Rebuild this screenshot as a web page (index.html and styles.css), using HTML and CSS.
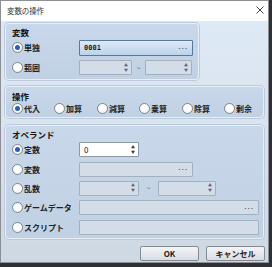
FILE: index.html
```html
<!DOCTYPE html>
<html lang="ja">
<head>
<meta charset="utf-8">
<link rel="stylesheet" href="styles.css">
</head>
<body>
<div class="dialog">
  <div class="titlebar">
    <span class="title">変数の操作</span>
    <svg class="close" width="8" height="8" viewBox="0 0 8 8"><path d="M0.5 0.5L7.5 7.5M7.5 0.5L0.5 7.5" stroke="#444" stroke-width="1"/></svg>
  </div>
  <div class="content">
    <div class="group g1">
      <div class="glabel">変数</div>
      <div class="row">
        <span class="radio checked"></span><span class="rlabel">単独</span>
        <div class="field focus w114"><span class="val mono">0001</span><span class="dots">···</span></div>
      </div>
      <div class="row">
        <span class="radio"></span><span class="rlabel">範囲</span>
        <div class="field dis w53"><span class="spin">▲<br>▼</span></div>
        <span class="tilde">~</span>
        <div class="field dis w47"><span class="spin">▲<br>▼</span></div>
      </div>
    </div>
    <div class="group g2">
      <div class="glabel">操作</div>
      <div class="ops">
        <span class="op"><span class="radio checked"></span><span class="rlabel">代入</span></span>
        <span class="op"><span class="radio"></span><span class="rlabel">加算</span></span>
        <span class="op"><span class="radio"></span><span class="rlabel">減算</span></span>
        <span class="op"><span class="radio"></span><span class="rlabel">乗算</span></span>
        <span class="op"><span class="radio"></span><span class="rlabel">除算</span></span>
        <span class="op"><span class="radio"></span><span class="rlabel">剰余</span></span>
      </div>
    </div>
    <div class="group g3">
      <div class="glabel">オペランド</div>
      <div class="row">
        <span class="radio checked"></span><span class="rlabel">定数</span>
        <div class="field white w60"><span class="val">0</span><span class="spin dark">▲<br>▼</span></div>
      </div>
      <div class="row">
        <span class="radio"></span><span class="rlabel">変数</span>
        <div class="field dis w114"><span class="dots">···</span></div>
      </div>
      <div class="row">
        <span class="radio"></span><span class="rlabel">乱数</span>
        <div class="field dis w60"><span class="spin">▲<br>▼</span></div>
        <span class="tilde t2">~</span>
        <div class="field dis w58"><span class="spin">▲<br>▼</span></div>
      </div>
      <div class="row">
        <span class="radio"></span><span class="rlabel">ゲームデータ</span>
        <div class="field dis wfull"><span class="dots">···</span></div>
      </div>
      <div class="row">
        <span class="radio"></span><span class="rlabel">スクリプト</span>
        <div class="field dis wfull"></div>
      </div>
    </div>
    <div class="buttons">
      <button class="btn">OK</button>
      <button class="btn">キャンセル</button>
    </div>
  </div>
</div>
</body>
</html>
```
FILE: styles.css
```css
html, body {
  margin: 0;
  padding: 0;
  background: #2f3033;
  width: 272px;
  height: 267px;
  overflow: hidden;
  font-family: "Noto Sans CJK JP", "Noto Sans", sans-serif;
}
.dialog {
  width: 267px;
  height: 261px;
  border: 1px solid #8c9096;
  background: linear-gradient(#deeaf6 0%, #d9e4ef 45%, #cdd8e2 100%);
  display: flex;
  flex-direction: column;
}
.titlebar {
  height: 20px;
  background: #fff;
  display: flex;
  align-items: center;
  justify-content: space-between;
  padding: 0 4px 0 6px;
  flex-shrink: 0;
}
.title {
  font-size: 7.5px;
  color: #333;
  letter-spacing: -0.1px;
  margin-top: -1px;
}
.close { margin-top: -3px; }
.content {
  padding: 2px 0 0 4px;
  display: flex;
  flex-direction: column;
}
.group {
  background: linear-gradient(#c8d7ea, #c1d1e4);
  border: 1px solid #e6eef7;
  border-radius: 4px;
  box-shadow: 0 0 0 1px #bccadb;
  padding: 3px 4px 0 6px;
  box-sizing: border-box;
}
.g1 { width: 194px; height: 57px; }
.g2 { width: 259px; height: 32px; margin-top: 6px; }
.g3 { width: 259px; height: 114px; margin-top: 7px; }
.g2 { padding-top: 4px; }
.glabel {
  font-size: 8.5px;
  font-weight: bold;
  color: #111;
  line-height: 11px;
  height: 11px;
}
.row {
  display: flex;
  align-items: center;
  height: 19px;
}
.g1 .row + .row { margin-top: 1px; }
.radio {
  width: 11px;
  height: 11px;
  border-radius: 50%;
  border: 1px solid #7f868f;
  background: radial-gradient(circle at 50% 40%, #ffffff 45%, #e3e6eb 100%);
  box-sizing: border-box;
  flex-shrink: 0;
  position: relative;
}
.radio.checked::after {
  content: "";
  position: absolute;
  left: 2px; top: 2px;
  width: 5px; height: 5px;
  border-radius: 50%;
  background: #2e5db4;
}
.rlabel {
  font-size: 8px;
  font-weight: bold;
  color: #222;
  margin-left: 1px;
  width: 55px;
  white-space: nowrap;
}
.field {
  height: 15px;
  box-sizing: border-box;
  border: 1px solid #a3b0be;
  background: #d3dde8;
  display: flex;
  align-items: center;
  justify-content: space-between;
  padding: 0 4px 0 4px;
  border-radius: 1px;
}
.field.focus {
  border-color: #57799d;
  background: linear-gradient(#dce9f7, #bcd3eb);
  height: 16px;
}
.field.white {
  background: #fff;
  border-color: #8e99a6;
}
.w114 { width: 114px; }
.w53 { width: 53px; }
.w60 { width: 60px; }
.w47 { width: 47px; }
.w58 { width: 58px; }
.wfull { width: 181px; }
.val { font-size: 8px; color: #111; }
.val.mono { font-family: "DejaVu Sans Mono", monospace; font-size: 7px; font-weight: bold; color: #1a1a1a; }
.dots {
  margin-left: auto;
  font-size: 8px;
  color: #444;
  letter-spacing: -1.2px;
  line-height: 1;
  margin-right: 1px;
}
.spin {
  margin-left: auto;
  font-size: 4px;
  line-height: 5px;
  color: #667;
  text-align: center;
  margin-right: -1px;
}
.spin.dark { color: #333; }
.tilde {
  font-size: 7px;
  color: #666;
  width: 13px;
  text-align: center;
}
.tilde.t2 { width: 19px; }
.ops {
  display: flex;
  align-items: center;
  height: 13px;
}
.op {
  display: flex;
  align-items: center;
}
.op .rlabel { width: auto; margin-left: 1px; }
.op:nth-child(1) { width: 42px; }
.op:nth-child(2) { width: 43px; }
.op:nth-child(3) { width: 42px; }
.op:nth-child(4) { width: 43px; }
.op:nth-child(5) { width: 42px; }
.g3 .row { height: 19.4px; }
.buttons {
  display: flex;
  justify-content: flex-end;
  gap: 7px;
  margin-top: 7px;
  padding-right: 3px;
}
.btn {
  width: 59px;
  height: 15px;
  border: 1px solid #868b92;
  border-radius: 2px;
  background: linear-gradient(#f3f4f6, #d9dde2);
  font-family: "Noto Sans CJK JP", "Noto Sans", sans-serif;
  font-size: 8px;
  font-weight: bold;
  color: #222;
  padding: 0;
  line-height: 13px;
}
```
